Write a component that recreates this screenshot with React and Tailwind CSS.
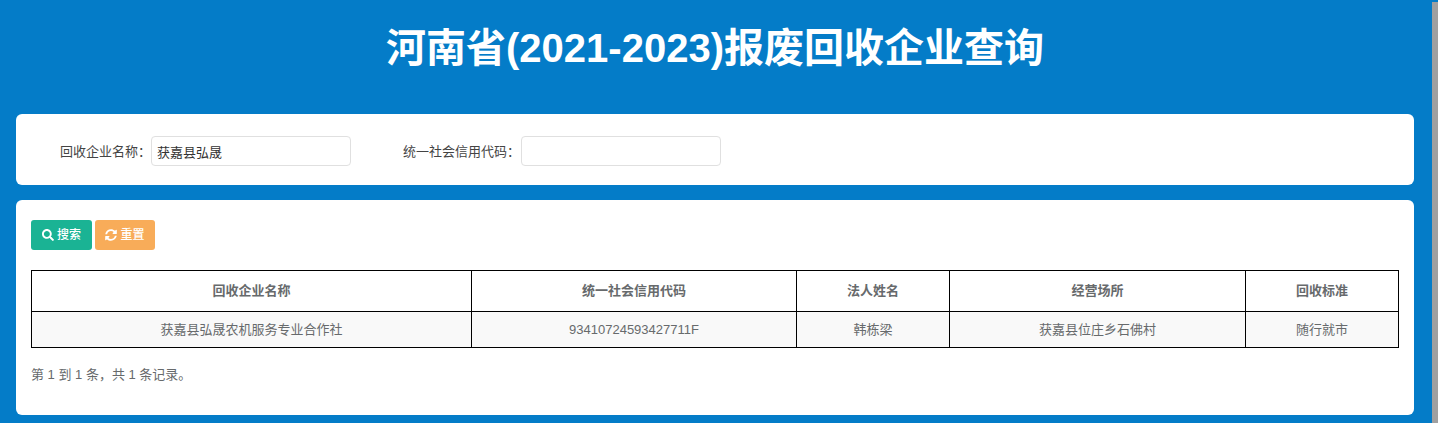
import { FaSearch, FaSyncAlt } from 'react-icons/fa';

const cols = [
  { h: '回收企业名称', v: '获嘉县弘晟农机服务专业合作社', w: 'w-[440px]' },
  { h: '统一社会信用代码', v: '93410724593427711F', w: 'w-[325px]' },
  { h: '法人姓名', v: '韩栋梁', w: 'w-[153px]' },
  { h: '经营场所', v: '获嘉县位庄乡石佛村', w: 'w-[296px]' },
  { h: '回收标准', v: '随行就市', w: 'w-[153px]' },
];

export default function App() {
  return (
    <div className="flex h-[423px] overflow-hidden bg-[#047cc8] font-['Liberation_Sans','Noto_Sans_CJK_SC',sans-serif]">
      <div className="w-[1432px] pr-[18px] pl-4">
        <h1 className="h-[114px] pt-[22px] text-center text-[40px] leading-[52px] font-bold text-white">
          河南省(2021-2023)报废回收企业查询
        </h1>

        <div className="mb-[15px] flex h-[71px] items-center rounded-md bg-white pt-[2px] pl-[44px] text-[13px] text-[#444]">
          <label className="pt-[2px]">回收企业名称：</label>
          <input readOnly value="获嘉县弘晟" className="h-[30px] w-[200px] rounded border border-[#e0e0e0] px-[5px] pt-[2px] text-[13px] text-[#333]" />
          <label className="mr-px ml-[52px] pt-[2px]">统一社会信用代码：</label>
          <input readOnly className="h-[30px] w-[200px] rounded border border-[#e0e0e0]" />
        </div>

        <div className="h-[215px] rounded-md bg-white px-[15px] pt-[20px] text-[13px] text-[#676a6c]">
          <div className="flex gap-[3px]">
            <button className="flex h-[30px] w-[61px] items-center justify-center gap-[3px] rounded-[3px] bg-[#1ab394] text-[12px] font-medium text-white">
              <FaSearch size={12} />搜索
            </button>
            <button className="flex h-[30px] w-[60px] items-center justify-center gap-[3px] rounded-[3px] bg-[#f8ac59] text-[12px] font-medium text-white">
              <FaSyncAlt size={12} />重置
            </button>
          </div>

          <table className="mt-[20px] w-[1368px] table-fixed border-collapse">
            <thead>
              <tr className="h-[41px]">
                {cols.map(c => (
                  <th key={c.h} className={`${c.w} border border-black text-center font-bold`}>{c.h}</th>
                ))}
              </tr>
            </thead>
            <tbody>
              <tr className="h-[36px] bg-[#f9f9f9]">
                {cols.map(c => (
                  <td key={c.h} className="border border-black text-center">{c.v}</td>
                ))}
              </tr>
            </tbody>
          </table>

          <p className="mt-[17px] leading-[20px]">第 1 到 1 条，共 1 条记录。</p>
        </div>
      </div>

      <div className="mt-[2px] w-[6px] bg-[#a0a0a0]" />
    </div>
  );
}
